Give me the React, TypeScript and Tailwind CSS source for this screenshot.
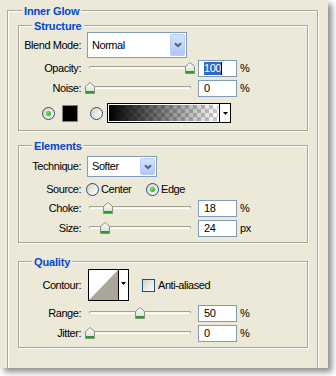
import React from 'react';

type Kids = { children?: React.ReactNode };

function Group({ title, indent, className = '', children }: { title: string; indent: string; className?: string } & Kids) {
  return (
    <div className={`border border-[#ACA899] shadow-[1px_1px_0_#fff,inset_1px_1px_0_#fff] ${className}`}>
      <div className="flex h-0 items-center">
        <span className={`${indent} bg-[#ECE9D8] px-[2px] text-[11px] font-bold leading-[14px] tracking-[-0.15px] text-[#0046D5]`}>{title}</span>
      </div>
      {children}
    </div>
  );
}

function Label({ children }: Kids) {
  return <div className="w-[62px] shrink-0 text-right text-[11px] leading-[13px]">{children}</div>;
}

function Thumb() {
  return (
    <svg width="10" height="12" viewBox="0 0 10 12">
      <defs>
        <linearGradient id="thumbFill" x1="0" y1="0" x2="0" y2="1">
          <stop offset="0" stopColor="#ffffff" />
          <stop offset="1" stopColor="#d8d8cf" />
        </linearGradient>
      </defs>
      <path d="M5 0.5 L9.5 4.5 V11.5 H0.5 V4.5 Z" fill="url(#thumbFill)" stroke="#8c8c80" />
      <rect x="1" y="9" width="8" height="2" fill="#21a121" />
    </svg>
  );
}

function Slider({ pos }: { pos: number }) {
  return (
    <div className="relative ml-[5px] h-[20px] w-[112px] shrink-0">
      <div className="absolute left-[3px] top-[8px] h-[3px] w-[102px] rounded-full border border-[#A4A192] border-b-white bg-[#F4F3EE]" />
      <div className="absolute top-[4px] flex" style={{ left: pos - 1 }}>
        <Thumb />
      </div>
    </div>
  );
}

function Num({ unit, children }: { unit: string } & Kids) {
  return (
    <>
      <div className="flex h-[17px] w-[39px] shrink-0 items-center border border-[#7F9DB9] bg-white pl-[5px] text-[11px]">
        {children}
      </div>
      <span className="ml-[3px] text-[11px]">{unit}</span>
    </>
  );
}

function SliderRow({ label, pos, value, unit }: { label: string; pos: number; value: React.ReactNode; unit: string }) {
  return (
    <div className="flex h-[20px] items-center">
      <Label>{label}</Label>
      <Slider pos={pos} />
      <Num unit={unit}>{value}</Num>
    </div>
  );
}

function Radio({ on }: { on?: boolean }) {
  return (
    <div className="flex h-[13px] w-[13px] shrink-0 items-center justify-center rounded-full border border-[#1C5180] bg-linear-to-br from-[#D4D2C6] to-white">
      {on && <div className="h-[5px] w-[5px] rounded-full bg-[radial-gradient(circle_at_35%_35%,#6fe06b,#21a121)]" />}
    </div>
  );
}

function Chevron() {
  return (
    <svg width="8" height="6" viewBox="0 0 8 6">
      <path d="M1 1.2 L4 4.2 L7 1.2" fill="none" stroke="#4D6185" strokeWidth="2" />
    </svg>
  );
}

function DownTri() {
  return (
    <svg width="5" height="3" viewBox="0 0 5 3">
      <path d="M0 0 H5 L2.5 3 Z" fill="#000" />
    </svg>
  );
}

function Select({ text, className }: { text: string; className: string }) {
  return (
    <div className={`ml-[6px] flex shrink-0 border border-[#7F9DB9] bg-white p-px ${className}`}>
      <div className="flex flex-1 items-center pl-[3px] text-[11px]">{text}</div>
      <div className="flex w-[15px] items-center justify-center rounded-[2px] border border-[#B9CBF3] bg-linear-to-b from-[#D6E2FD] to-[#B2C7F8]">
        <Chevron />
      </div>
    </div>
  );
}

export default function App() {
  return (
    <div className="h-[376px] w-[336px] bg-white font-['Liberation_Sans',Arial,sans-serif] tracking-[-0.45px] text-black">
      <div className="h-[368px] w-[328px] overflow-hidden bg-[#ECE9D8] pl-[7px] pt-[10px] shadow-[4px_4px_6px_rgba(0,0,0,0.45)]">
        <Group title="Inner Glow" indent="ml-[14px]" className="h-[380px] w-[311px]">
          <Group title="Structure" indent="ml-[13px]" className="ml-[10px] mt-[14px] h-[106px] w-[290px]">
            <div className="pt-[6px]">
              <div className="flex h-[26px] items-start">
                <div className="pt-[7px]">
                  <Label>Blend Mode:</Label>
                </div>
                <Select text="Normal" className="h-[26px] w-[100px]" />
              </div>
              <SliderRow
                label="Opacity:"
                pos={100}
                unit="%"
                value={
                  <span className="flex items-center">
                    <span className="bg-[#316AC5] leading-[13px] text-white">100</span>
                    <span className="h-[13px] w-px bg-black" />
                  </span>
                }
              />
              <SliderRow label="Noise:" pos={0} value="0" unit="%" />
              <div className="mt-[5px] flex h-[20px] items-center">
                <div className="ml-[23px]">
                  <Radio on />
                </div>
                <div className="ml-[7px] h-[17px] w-[16px] border border-[#808080] bg-black" />
                <div className="ml-[12px]">
                  <Radio />
                </div>
                <div className="ml-[4px] flex h-[20px] w-[124px] border border-black bg-white">
                  <div className="m-px flex-1 bg-[conic-gradient(#c8c8c8_25%,#fff_0_50%,#c8c8c8_0_75%,#fff_0)] bg-[length:8px_8px]">
                    <div className="h-full w-full bg-linear-to-r from-black to-transparent" />
                  </div>
                  <div className="flex w-[11px] items-center justify-center border-l border-black">
                    <DownTri />
                  </div>
                </div>
              </div>
            </div>
          </Group>

          <Group title="Elements" indent="ml-[13px]" className="ml-[10px] mt-[14px] h-[98px] w-[290px]">
            <div className="pt-[10px]">
              <div className="flex h-[21px] items-center">
                <Label>Technique:</Label>
                <Select text="Softer" className="h-[21px] w-[70px]" />
              </div>
              <div className="mt-[3px] flex h-[18px] items-center text-[11px]">
                <Label>Source:</Label>
                <div className="ml-[5px]">
                  <Radio />
                </div>
                <span className="ml-[2px] w-[45px]">Center</span>
                <Radio on />
                <span className="ml-[2px]">Edge</span>
              </div>
              <SliderRow label="Choke:" pos={18} value="18" unit="%" />
              <SliderRow label="Size:" pos={15} value="24" unit="px" />
            </div>
          </Group>

          <Group title="Quality" indent="ml-[13px]" className="ml-[10px] mt-[18px] h-[87px] w-[290px]">
            <div className="pt-[7px]">
              <div className="flex h-[32px] items-center">
                <Label>Contour:</Label>
                <div className="ml-[7px] flex h-[32px] w-[41px] shrink-0 border border-black bg-white">
                  <svg width="29" height="30" viewBox="0 0 29 30">
                    <polygon points="0,30 29,0 29,30" fill="#ABA696" />
                  </svg>
                  <div className="flex flex-1 justify-center border-l border-black pt-[12px]">
                    <DownTri />
                  </div>
                </div>
                <div className="ml-[13px] h-[13px] w-[13px] shrink-0 border border-[#1C5180] bg-linear-to-br from-[#D4D2C6] to-white" />
                <span className="ml-[3px] text-[11px]">Anti-aliased</span>
              </div>
              <div className="mt-[2px]">
                <SliderRow label="Range:" pos={50} value="50" unit="%" />
                <SliderRow label="Jitter:" pos={0} value="0" unit="%" />
              </div>
            </div>
          </Group>
        </Group>
      </div>
    </div>
  );
}
